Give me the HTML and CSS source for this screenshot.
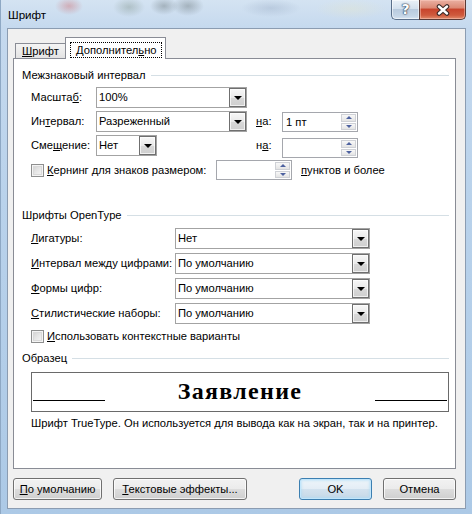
FILE: index.html
```html
<!DOCTYPE html>
<html lang="ru">
<head>
<meta charset="utf-8">
<title>Шрифт</title>
<link rel="stylesheet" href="styles.css">
</head>
<body>
<div class="window">
  <div class="titlebar">
    <span class="title">Шрифт</span>
    <div class="caption">
      <div class="cap-help">?</div>
      <div class="cap-close">
        <svg width="16" height="12" viewBox="0 0 16 12"><path d="M4 2.5 L12 9.5 M12 2.5 L4 9.5" stroke="#3a2a28" stroke-width="4.6" stroke-linecap="round"/><path d="M4 2.5 L12 9.5 M12 2.5 L4 9.5" stroke="#ffffff" stroke-width="2.4" stroke-linecap="round"/></svg>
      </div>
    </div>
  </div>
  <div class="client">
    <div class="tabs">
      <div class="tab"><u>Ш</u>рифт</div>
      <div class="tab active"><span class="focus">Дополнител<u>ь</u>но</span></div>
    </div>
    <div class="panel">
      <div class="group-title g1"><span>Межзнаковый интервал</span><i></i></div>

      <div class="row r-first">
        <span class="lbl l1">Масшта<u>б</u>:</span>
        <div class="combo c-wide"><span class="cv">100%</span><b class="drop"><em></em></b></div>
      </div>
      <div class="row">
        <span class="lbl l1">Ин<u>т</u>ервал:</span>
        <div class="combo c-wide"><span class="cv">Разреженный</span><b class="drop"><em></em></b></div>
        <span class="lbl na"><u>н</u>а:</span>
        <div class="spin s-top1"><span class="sv">1 пт</span><div class="sbtns"><i class="sb"><em class="up"></em></i><i class="sb"><em class="dn"></em></i></div></div>
      </div>
      <div class="row">
        <span class="lbl l1">Сме<u>щ</u>ение:</span>
        <div class="combo c-narrow"><span class="cv">Нет</span><b class="drop"><em></em></b></div>
        <span class="lbl na na2">н<u>а</u>:</span>
        <div class="spin s-top3"><span class="sv"></span><div class="sbtns"><i class="sb"><em class="up"></em></i><i class="sb"><em class="dn"></em></i></div></div>
      </div>
      <div class="row r-kern">
        <span class="cb"></span>
        <span class="lbl kern"><u>К</u>ернинг для знаков размером:</span>
        <div class="spin"><span class="sv"></span><div class="sbtns"><i class="sb"><em class="up"></em></i><i class="sb"><em class="dn"></em></i></div></div>
        <span class="lbl pts"><u>п</u>унктов и более</span>
      </div>

      <div class="group-title g2"><span>Шрифты OpenType</span><i></i></div>

      <div class="row r2 r2-first">
        <span class="lbl l2"><u>Л</u>игатуры:</span>
        <div class="combo c-ot"><span class="cv">Нет</span><b class="drop"><em></em></b></div>
      </div>
      <div class="row r2">
        <span class="lbl l2"><u>И</u>нтервал между цифрами:</span>
        <div class="combo c-ot"><span class="cv">По умолчанию</span><b class="drop"><em></em></b></div>
      </div>
      <div class="row r2">
        <span class="lbl l2"><u>Ф</u>ормы цифр:</span>
        <div class="combo c-ot"><span class="cv">По умолчанию</span><b class="drop"><em></em></b></div>
      </div>
      <div class="row r2">
        <span class="lbl l2"><u>С</u>тилистические наборы:</span>
        <div class="combo c-ot"><span class="cv">По умолчанию</span><b class="drop"><em></em></b></div>
      </div>
      <div class="row r-ctx">
        <span class="cb"></span>
        <span class="lbl ctx"><u>И</u>спользовать контекстные варианты</span>
      </div>

      <div class="group-title g3"><span>Образец</span><i></i></div>

      <div class="preview">
        <span class="pline"></span>
        <span class="ptext">Заявление</span>
        <span class="pline"></span>
      </div>
      <div class="pcaption">Шрифт TrueType. Он используется для вывода как на экран, так и на принтер.</div>
    </div>
    <div class="buttons">
      <div class="btn b-def"><span><u>П</u>о умолчанию</span></div>
      <div class="btn b-fx"><span><u>Т</u>екстовые эффекты...</span></div>
      <div class="btn b-ok"><span>OK</span></div>
      <div class="btn b-cancel"><span>Отмена</span></div>
    </div>
  </div>
</div>
</body>
</html>
```
FILE: styles.css
```css
* { box-sizing: border-box; }
html, body { margin: 0; padding: 0; }
body {
  width: 472px;
  height: 514px;
  overflow: hidden;
  font-family: "Liberation Sans", Arial, sans-serif;
  font-size: 11.2px;
  color: #000;
  background: #b3cde8;
}
u { text-decoration: underline; text-underline-offset: 1px; text-decoration-thickness: 1px; }

.window {
  width: 472px;
  height: 514px;
  overflow: hidden;
  background:
    radial-gradient(ellipse 14px 9px at 68px 6px, rgba(205,80,80,.35), transparent),
    radial-gradient(ellipse 16px 10px at 128px 7px, rgba(90,110,90,.28), transparent),
    radial-gradient(ellipse 14px 9px at 163px 6px, rgba(60,70,70,.30), transparent),
    radial-gradient(ellipse 16px 10px at 187px 6px, rgba(60,70,70,.30), transparent),
    radial-gradient(ellipse 30px 9px at 270px 8px, rgba(120,140,170,.25), transparent),
    radial-gradient(ellipse 36px 10px at 350px 9px, rgba(230,230,200,.35), transparent),
    linear-gradient(180deg, #d4e3f2 0, #c5d9ee 28px, #b9d2eb 200px, #acc9e6 514px);
  border-left: 1px solid #8ea8c4;
}

.titlebar {
  display: flex;
  height: 28px;
  padding-left: 7px;
}
.title {
  padding-top: 7px;
  line-height: 16px;
  font-size: 11.6px;
}
.caption {
  display: flex;
  margin-left: auto;
  margin-right: 6px;
  height: 20px;
  align-self: flex-start;
}
.cap-help {
  width: 28px;
  height: 20px;
  border: 1px solid #5a6f8a;
  border-top: none;
  border-right: none;
  border-radius: 0 0 0 5px;
  background: linear-gradient(180deg, #eaf1f8 0, #d4e1ee 45%, #b9cbde 50%, #c6d6e7 85%, #d9e5f1 100%);
  box-shadow: inset 0 0 0 1px rgba(255,255,255,.55);
  color: #fff;
  font: bold 14px/19px "DejaVu Sans", sans-serif;
  text-align: center;
  text-shadow: 0 0 1px #2b3d55, 0 0 1px #2b3d55, 0 0 2px #2b3d55;
}
.cap-close {
  width: 47px;
  height: 20px;
  border: 1px solid #5a3a36;
  border-top: none;
  border-radius: 0 0 5px 0;
  background: linear-gradient(180deg, #eab0a2 0, #dc8a76 40%, #c8452d 50%, #cf5a3d 80%, #e18c6c 100%);
  box-shadow: inset 0 0 0 1px rgba(255,210,200,.45);
  display: flex;
  align-items: center;
  justify-content: center;
}

.client {
  margin-left: 6px;
  width: 459px;
  height: 481px;
  border: 1px solid #8b9cb1;
  background: #f0f0f0;
}

.tabs {
  display: flex;
  align-items: flex-end;
  height: 29px;
  padding-left: 7px;
}
.tab {
  position: relative;
  height: 15px;
  width: 52px;
  padding-left: 6px;
  border: 1px solid #898c95;
  border-bottom: none;
  background: linear-gradient(180deg, #f4f4f4 0, #ececec 50%, #e3e3e3 100%);
  line-height: 14px;
}
.tab.active {
  z-index: 2;
  margin-left: -2px;
  margin-bottom: -1px;
  height: 22px;
  width: 101px;
  padding: 4px 0 0 4px;
  background: #fff;
}
.focus {
  display: block;
  width: 92px;
  height: 16px;
  border: 1px dotted #000;
  padding-left: 5px;
  line-height: 14px;
}

.panel {
  margin-left: 5px;
  width: 443px;
  height: 411px;
  border: 1px solid #898c95;
  background: #fff;
}

.group-title {
  display: flex;
  align-items: center;
  height: 15px;
  padding-left: 8px;
  padding-right: 6px;
  line-height: 15px;
}
.group-title i {
  flex: 1;
  height: 1px;
  margin-left: 5px;
  background: #d5dfe5;
}
.g1 { margin-top: 9px; }
.g2 { margin-top: 28px; }
.g3 { margin-top: 8px; }

.row {
  display: flex;
  align-items: center;
  height: 21px;
  margin-top: 3px;
  margin-left: 17px;
}
.r-first { margin-top: 4px; }
.lbl { white-space: nowrap; line-height: 15px; }
.l1 { width: 65px; }
.na { width: 26px; margin-left: 9px; }
.na2 { margin-left: 99px; }

.combo {
  display: flex;
  align-items: stretch;
  height: 21px;
  border: 1px solid #a3a3a3;
  background: #fff;
}
.cv { flex: 1; padding-left: 2px; line-height: 19px; white-space: nowrap; overflow: hidden; }
.c-wide { width: 151px; }
.c-narrow { width: 61px; }
.c-ot { width: 195px; }
.drop {
  width: 17px;
  border: 1px solid #6f6f6f;
  background: linear-gradient(180deg, #f7f7f7 0, #e9e9e9 50%, #d8d8d8 51%, #cfcfcf 100%);
  box-shadow: inset 0 0 0 1px rgba(255,255,255,.7);
  display: flex;
  align-items: center;
  justify-content: center;
}
.drop em {
  width: 0; height: 0;
  border-left: 4px solid transparent;
  border-right: 4px solid transparent;
  border-top: 4px solid #000;
}

.spin {
  display: flex;
  width: 76px;
  height: 20px;
  border: 1px solid #a5a7ad;
  background: #fff;
  align-self: flex-start;
}
.s-top1 { margin-top: 1px; }
.s-top3 { margin-top: 3px; }
.sv { flex: 1; padding-left: 3px; line-height: 18px; }
.sbtns {
  display: flex;
  flex-direction: column;
  width: 15px;
  margin: 1px 1px 1px 0;
  gap: 1px;
}
.sb {
  flex: 1;
  border: 1px solid #cfd1d6;
  background: linear-gradient(180deg, #f8f8f8, #e4e4e4);
  display: flex;
  align-items: center;
  justify-content: center;
}
.sb .up, .sb .dn {
  width: 0; height: 0;
  border-left: 3.5px solid transparent;
  border-right: 3.5px solid transparent;
}
.sb .up { border-bottom: 3px solid #4e62a0; }
.sb .dn { border-top: 3px solid #4e62a0; }

.r-kern { margin-top: 4px; height: 20px; }
.r-kern .spin { align-self: center; }
.cb {
  flex: none;
  width: 13px;
  height: 13px;
  border: 1px solid #8e8f8f;
  background: linear-gradient(135deg, #cdcdcd 0, #e6e6e6 50%, #f8f8f8 100%);
  box-shadow: inset 0 0 0 1px #f4f4f4, inset 0 0 0 2px #d9d9d9;
}
.kern { width: 169px; margin-left: 3px; }
.pts { margin-left: 9px; }

.r2 { margin-top: 4px; }
.r2-first { margin-top: 5px; }
.l2 { width: 144px; }
.r-ctx { margin-top: 6px; height: 13px; }
.ctx { margin-left: 3px; }

.preview {
  display: grid;
  grid-template-columns: 72px 1fr 72px;
  align-items: start;
  margin-top: 6px;
  margin-left: 17px;
  width: 418px;
  height: 40px;
  padding: 0 1px;
  border: 1px solid #6a6a6a;
}
.pline { height: 1px; background: #000; margin-top: 27px; }
.ptext {
  margin-top: 6px;
  text-align: center;
  font-family: "Liberation Serif", "Times New Roman", serif;
  font-weight: bold;
  font-size: 24px;
  line-height: 24px;
  letter-spacing: 1.33px;
}
.pcaption {
  margin-top: 3px;
  margin-left: 17px;
  line-height: 16px;
  white-space: nowrap;
}

.buttons {
  display: flex;
  margin-top: 9px;
  margin-left: 5px;
  width: 443px;
}
.btn {
  height: 22px;
  border: 1px solid #707070;
  border-radius: 3px;
  background: linear-gradient(180deg, #f2f2f2 0, #ebebeb 50%, #dddddd 50%, #cfcfcf 100%);
  box-shadow: inset 0 0 0 1px rgba(255,255,255,.75);
  display: flex;
  align-items: center;
  justify-content: center;
  white-space: nowrap;
}
.b-def { width: 89px; }
.b-fx { width: 134px; margin-left: 11px; }
.b-ok {
  width: 73px;
  margin-left: auto;
  border-color: #3c7fb1;
  background: linear-gradient(180deg, #eef5fa 0, #e3edf5 50%, #d3e2ee 50%, #c6d8e8 100%);
  box-shadow: inset 0 0 0 1px #c2e6fb, inset 0 0 2px 2px rgba(170,220,248,.5);
}
.b-cancel { width: 73px; margin-left: 11px; }
```
